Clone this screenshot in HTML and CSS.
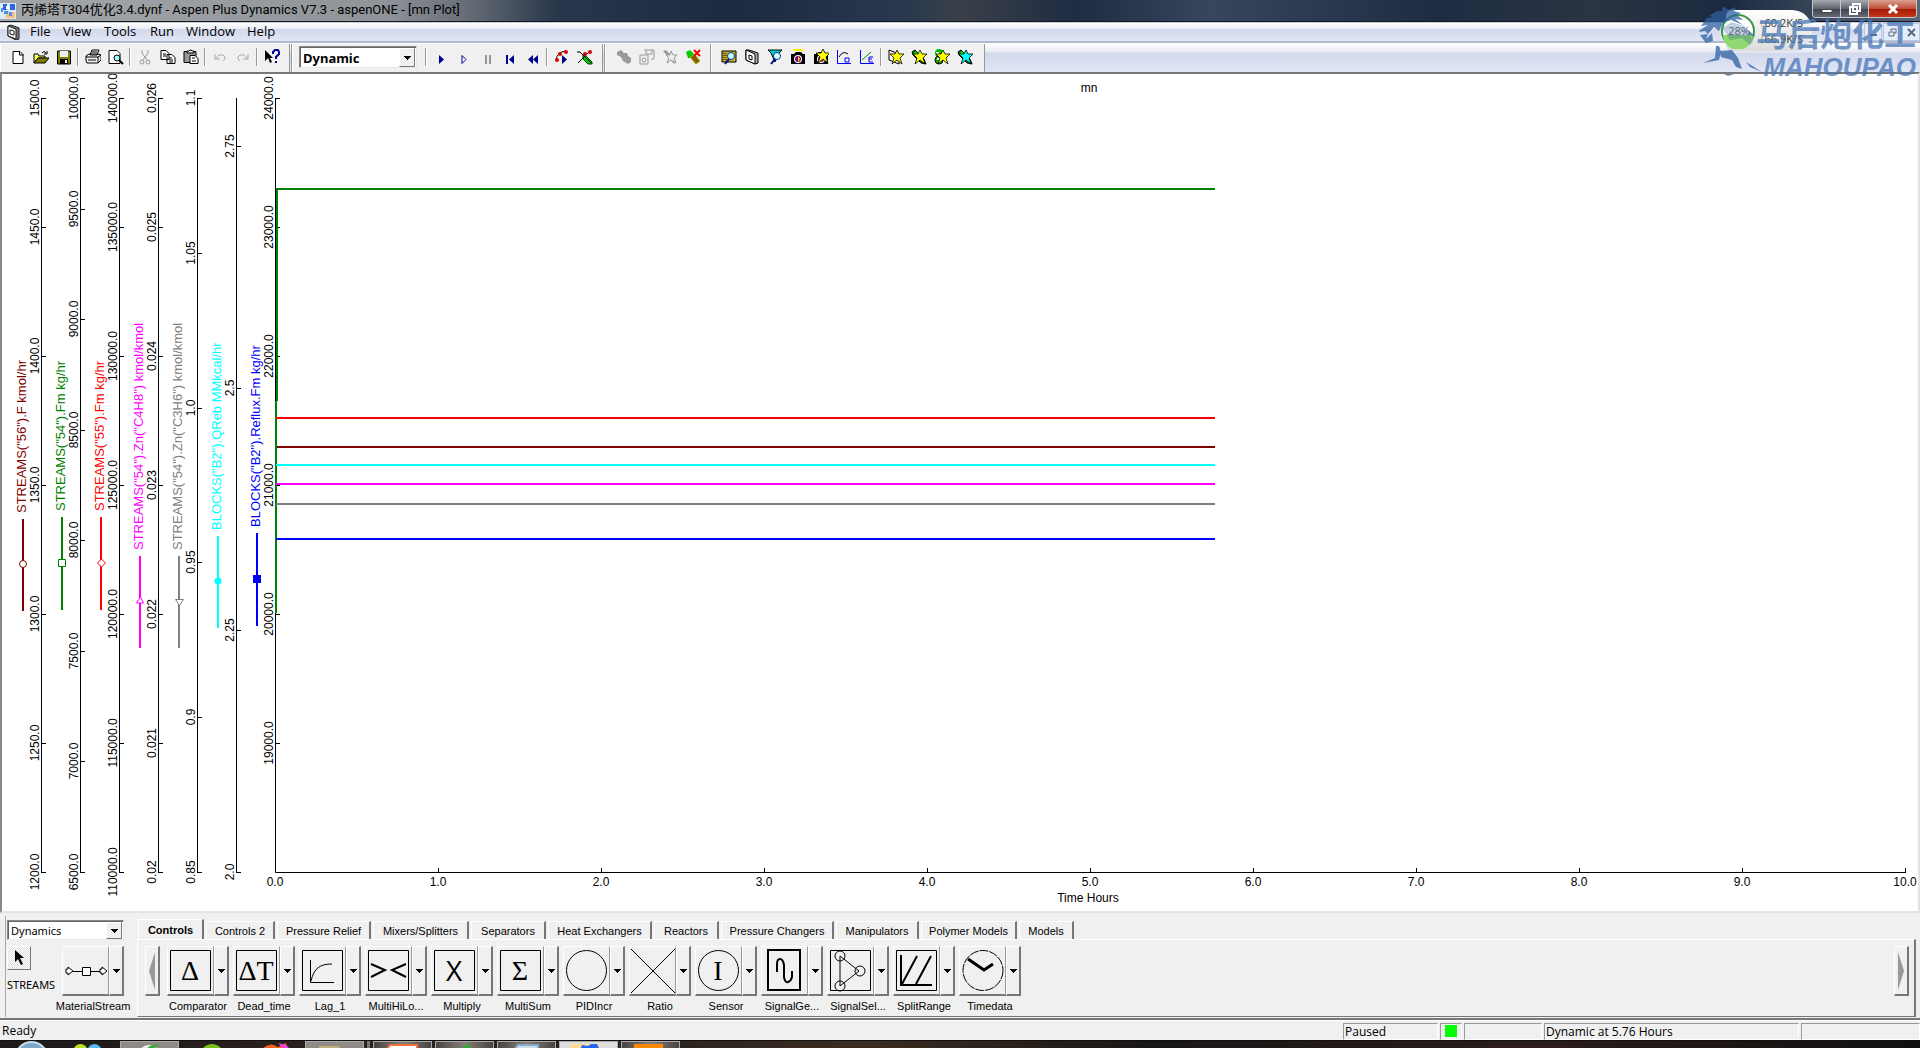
FILE: index.html
```html
<!DOCTYPE html>
<html lang="en">
<head>
<meta charset="utf-8">
<title>丙烯塔T304优化3.4.dynf - Aspen Plus Dynamics V7.3 - aspenONE - [mn Plot]</title>
<link rel="stylesheet" href="styles.css">
</head>
<body>
<svg class="defs" aria-hidden="true">
  <defs>
    <path id="star" d="M9 1l2 4h5l-4 4 2 6-5-4-5 4 2-6-4-4h5z" stroke="#000" stroke-width=".8"/>
    <path id="tri" d="M0 0h7v1H6v1H5v1H4v1H3V3H2V2H1V1H0z"/>
    <g id="cam"><path d="M1 5h3l2-2h5l2 2h2v10H1z" fill="#000"/><circle cx="8" cy="10" r="4" fill="#fff"/><circle cx="8" cy="10" r="3" fill="#800080"/><path d="M8 7l2 3-2 3z" fill="#ffe000"/></g>
    <g id="plug"><path d="M1 3l3-2 9 9 2 5-5-1-8-8z" fill="#008000" stroke="#000"/><path d="M4 3l8 8" stroke="#0f0" stroke-width="2"/></g>
  </defs>
</svg>

<header class="title-bar">
  <svg class="app-icon" viewBox="0 0 16 16"><path d="M0 0h16v16H0z" fill="#dfeaf8"/><path d="M6 9h9v6H6z" fill="#f8c070"/><path d="M3 1h4v6H3zM10 1h5v6h-5z" fill="#2868d8"/><path d="M1 5h2v4H1zM4 8h4v3H4zM9 9h3v4H9z" fill="#4a90e8"/><path d="M6 3h3v3H6z" fill="#fff"/></svg>
  <h1 class="title">丙烯塔T304优化3.4.dynf - Aspen Plus Dynamics V7.3 - aspenONE - [mn Plot]</h1>
  <div class="win-buttons">
    <button class="win-btn" aria-label="Minimize"><svg width="12" height="12" viewBox="0 0 12 12"><path d="M1 6.500h10v3H1z" fill="#fff" stroke="#444"/></svg></button>
    <button class="win-btn" aria-label="Restore"><svg width="12" height="12" viewBox="0 0 12 12"><path d="M4 1h7v7H4zM1 4h7v7H1z" fill="none" stroke="#fff" stroke-width="2"/></svg></button>
    <button class="win-btn close" aria-label="Close"><svg width="12" height="12" viewBox="0 0 12 12"><path d="M2 2l8 8M10 2l-8 8" stroke="#fff" stroke-width="3"/></svg></button>
  </div>
</header>

<nav class="menu-bar">
  <svg class="doc-icon" viewBox="0 0 16 16"><path d="M2 2l3-1 8 3v11l-3 1-8-4z" fill="#777" stroke="#222"/><path d="M2 2l8 3v10l-8-3z" fill="#eee" stroke="#222"/><path d="M4 6l4 1v4l-4-1z" fill="#fff" stroke="#222"/></svg>
  <button class="menu m1">File</button><button class="menu m2">View</button><button class="menu m3">Tools</button><button class="menu m4">Run</button><button class="menu m5">Window</button><button class="menu m6">Help</button>
  <div class="mdi-buttons">
    <button class="mdi" aria-label="Minimize document"><svg width="9" height="9" viewBox="0 0 9 9"><path d="M1 6h7v2H1z" fill="#5a6a84"/></svg></button>
    <button class="mdi" aria-label="Restore document"><svg width="9" height="9" viewBox="0 0 9 9"><path d="M3 3V1h5v4H6M1 4h5v4H1z" fill="none" stroke="#5a6a84"/></svg></button>
    <button class="mdi" aria-label="Close document"><svg width="9" height="9" viewBox="0 0 9 9"><path d="M1 1l7 7M8 1L1 8" stroke="#5a6a84" stroke-width="2"/></svg></button>
  </div>
</nav>

<div class="toolbars">
  <div class="toolbar">
    <button class="tool" aria-label="New"><svg viewBox="0 0 16 16"><path d="M3 2.500h7l3 3v9H3z" fill="#fff" stroke="#000"/><path d="M9.500 2.500v3.500h4" fill="none" stroke="#000"/></svg></button>
    <button class="tool" aria-label="Open"><svg viewBox="0 0 16 16"><path d="M1 14V5h4l1 2h6v2H5z" fill="#ffff60" stroke="#000"/><path d="M1 14l4-5h11l-4 5z" fill="#808000" stroke="#000"/><path d="M9 4q2-3 4 0M14 2v3h-3" fill="none" stroke="#000"/></svg></button>
    <button class="tool" aria-label="Save"><svg viewBox="0 0 16 16"><path d="M1.500 2h13v13h-13z" fill="#808000" stroke="#000"/><path d="M4 2h8v6H4z" fill="#eee"/><path d="M4 10h8v5H4z" fill="#000"/><path d="M9 11h2v3H9z" fill="#eee"/></svg></button>
    <i class="sep"></i>
    <button class="tool" aria-label="Print"><svg viewBox="0 0 16 16"><path d="M5 6l2-5h7l-2 5zM1 7l3-2h9l3 1v5l-3 3H2l-1-2z" fill="#eee" stroke="#000"/><path d="M1 8h12v5M13 8l3-2M3 11h8M7 3h5" fill="none" stroke="#000"/></svg></button>
    <button class="tool" aria-label="Print preview"><svg viewBox="0 0 16 16"><path d="M1 1.500h8l3 3v10H1z" fill="#fff" stroke="#000"/><circle cx="9" cy="9" r="3" fill="#9ff" stroke="#000"/><path d="M11 11l4 4" stroke="#000" stroke-width="2"/></svg></button>
    <i class="sep"></i>
    <button class="tool" aria-label="Cut"><svg viewBox="0 0 16 16" fill="none" stroke="#999"><path d="M5 1v3l5 7M11 1v3l-5 7"/><circle cx="5" cy="13" r="2"/><circle cx="11" cy="13" r="2"/></svg></button>
    <button class="tool" aria-label="Copy"><svg viewBox="0 0 16 16" fill="#fff" stroke="#000"><path d="M1 1.500h5l3 3v6H1zM7 5.500h5l3 3v6H7z"/><path d="M3 5h3M3 7h3M9 9h3M9 11h4M9 13h4"/></svg></button>
    <button class="tool" aria-label="Paste"><svg viewBox="0 0 16 16" stroke="#000"><path d="M1 2.500h12v11H1z" fill="#999"/><path d="M4 4V2h2l1-1h1l1 1h2v2z" fill="#eee"/><path d="M7 6.500h5l3 3v5H7z" fill="#fff"/><path d="M9 9h3M9 12h4"/></svg></button>
    <i class="sep"></i>
    <button class="tool" aria-label="Undo"><svg viewBox="0 0 16 16" fill="none" stroke="#aaa"><path d="M3 5v5h5M3 10l4-4h4l2 2v2l-2 2"/></svg></button>
    <button class="tool" aria-label="Redo"><svg viewBox="0 0 16 16" fill="none" stroke="#aaa"><path d="M13 5v5H8M13 10L9 6H5L3 8v2l2 2"/></svg></button>
    <i class="sep"></i>
    <button class="tool" aria-label="Context help"><svg viewBox="0 0 16 16"><path d="M1 1v11l3-3 2 5 2-1-2-4h3z"/><path d="M9 5V3l2-2h3l1 2v2l-3 3v2" fill="none" stroke="#000090" stroke-width="2"/><path d="M11 12h2v2h-2z" fill="#000090"/></svg></button>
  </div>
  <div class="toolbar">
    <label class="hidden" for="mode">Run mode</label>
    <span class="combo mode"><select id="mode"><option>Dynamic</option></select><span class="drop"><svg width="7" height="4"><use href="#tri"/></svg></span></span>
    <i class="sep"></i>
    <button class="tool" aria-label="Run"><svg viewBox="0 0 16 16"><path d="M6 6v9l5-4.500z" fill="#000090"/></svg></button>
    <button class="tool" aria-label="Step"><svg viewBox="0 0 16 16"><path d="M6 6.500v8l4-4z" fill="#fff" stroke="#000090"/></svg></button>
    <button class="tool" aria-label="Pause"><svg viewBox="0 0 16 16"><path d="M6 6h2v9H6zM10 6h2v9h-2z" fill="#999"/></svg></button>
    <button class="tool" aria-label="Restart"><svg viewBox="0 0 16 16"><path d="M4 6h2v9H4zM12 6v9l-5-4.500z" fill="#000090"/></svg></button>
    <button class="tool" aria-label="Rewind"><svg viewBox="0 0 16 16"><path d="M8 6v9l-5-4.500zM13 6v9l-5-4.500z" fill="#000090"/></svg></button>
    <i class="sep"></i>
    <button class="tool" aria-label="Run history"><svg viewBox="0 0 16 16"><path d="M2 11Q3 3 12 2" fill="none" stroke="#000"/><path d="M8 6v9l5-4.500z" fill="#000090"/><g fill="#e00000"><circle cx="3" cy="11" r="2"/><circle cx="6" cy="5" r="2"/><circle cx="12" cy="3" r="2"/></g></svg></button>
    <button class="tool" aria-label="Remove snapshots"><svg viewBox="0 0 16 16"><path d="M6 6l3 1 6 6v2h-4l-5-5z" fill="#0c0" stroke="#040"/><path d="M0 3h3l11 11M1 14L12 3" fill="none" stroke="#000"/><g fill="#e00000"><circle cx="8" cy="5" r="2"/><circle cx="13" cy="3" r="2"/></g></svg></button>
  </div>
  <div class="toolbar">
    <button class="tool" aria-label="Connect"><svg viewBox="0 0 16 16"><path d="M1 3l4-2 3 3h3l1 3 3 2v4l-3 2-5-3-2-4-4-2z" fill="#999"/></svg></button>
    <button class="tool" aria-label="Disk"><svg viewBox="0 0 16 16" fill="none" stroke="#999"><path d="M5 1h10v9h-3M7 1v4h6V1M1 6h8v9H1z"/><circle cx="5" cy="11" r="2"/></svg></button>
    <button class="tool" aria-label="New link"><svg viewBox="0 0 16 16"><path d="M1 2l3-1 10 11-2 3z" fill="#999"/><path d="M9 2l2 4h4l-3 3 2 5-5-3-4 3 2-5-3-3h4z" fill="#eee" stroke="#999"/></svg></button>
    <button class="tool" aria-label="Disconnect"><svg viewBox="0 0 16 16"><path d="M1 3l4-2 4 4-2 4H3z" fill="#0c0"/><path d="M5 8l5-2 5 6-4 3z" fill="#806000" stroke="#aa0"/><path d="M9 1l6 6M15 1L9 7" stroke="#f00" stroke-width="2"/></svg></button>
  </div>
  <div class="toolbar last">
    <button class="tool" aria-label="Explorer"><svg viewBox="0 0 16 16"><path d="M1 2h14v11H1z" fill="#c8b020" stroke="#000"/><path d="M3 4v7M5 4v7" stroke="#000" stroke-dasharray="1"/><circle cx="10" cy="7" r="3.500" fill="#cff" stroke="#0040a0"/><path d="M8 10l-4 5" stroke="#000090" stroke-width="2"/></svg></button>
    <button class="tool" aria-label="Flowsheet"><svg viewBox="0 0 16 16"><path d="M2 1l3 0 9 3v10l-3 1-9-4z" fill="#aaa" stroke="#000"/><path d="M2 1l9 4v10l-9-4z" fill="#fff" stroke="#000"/><path d="M5 6l3 1v4l-3-1z" fill="none" stroke="#000"/></svg></button>
    <button class="tool" aria-label="Find"><svg viewBox="0 0 16 16"><path d="M1 1h14l-3 3-4 9-4-9z" fill="#0cc" stroke="#000"/><circle cx="10" cy="7" r="3.500" fill="#dff" stroke="#0040a0"/><path d="M8 10l-4 5" stroke="#000090" stroke-width="2"/></svg></button>
    <button class="tool" aria-label="Snapshots"><svg viewBox="0 0 16 16"><use href="#cam"/><path d="M3 1h10" stroke="#fe0" stroke-width="2"/></svg></button>
    <button class="tool" aria-label="Take snapshot"><svg viewBox="0 0 16 16"><use href="#cam"/><use href="#star" fill="#ff0" x="1" y="-1"/></svg></button>
    <button class="tool" aria-label="Optimization"><svg viewBox="0 0 16 16" fill="none" stroke="#00f"><path d="M1.500 1v13.500H15M9 9h4v4H9z"/><path d="M3 8Q7 1 12 5" stroke="#000"/></svg></button>
    <button class="tool" aria-label="Estimation"><svg viewBox="0 0 16 16" fill="none" stroke="#00f"><path d="M1.500 1v13.500H15M14 8h-4v5h4M10 10h3"/><path d="M3 11l9-8" stroke="#080"/></svg></button>
    <i class="sep"></i>
    <button class="tool" aria-label="New flowsheet"><svg viewBox="0 0 16 16"><path d="M1 1l10 4v10l-10-4z" fill="#eee" stroke="#000"/><use href="#star" fill="#ff0"/></svg></button>
    <button class="tool" aria-label="New model"><svg viewBox="0 0 16 16"><use href="#plug"/><use href="#star" fill="#ff0"/></svg></button>
    <button class="tool" aria-label="New form"><svg viewBox="0 0 16 16"><circle cx="5" cy="4" r="4" fill="#0b0"/><circle cx="5" cy="11" r="4" fill="#0b0" stroke="#000"/><path d="M2 3h3v2H2zM3 9h3v2H3z" fill="#fff"/><use href="#star" fill="#ff0"/></svg></button>
    <button class="tool" aria-label="New task"><svg viewBox="0 0 16 16"><use href="#plug"/><use href="#star" fill="#0ff"/></svg></button>
  </div>
</div>

<main class="plot">
<svg class="chart" viewBox="2 74 1916 837" role="img" aria-label="mn plot">
  <text class="lbl" x="1089" y="92" text-anchor="middle">mn</text>
  <path class="axis" d="M41.500 98V872M80.500 98V872M119.500 98V872M158.500 98V872M197.500 98V872M236.500 98V872M275.500 98V872.500H1905
  M41 98.500h5M41 227.500h5M41 356.500h5M41 485.500h5M41 614.500h5M41 743.500h5M41 872.500h5
  M80 98.500h5M80 209.500h5M80 319.500h5M80 430.500h5M80 540.500h5M80 651.500h5M80 761.500h5M80 872.500h5
  M119 98.500h5M119 227.500h5M119 356.500h5M119 485.500h5M119 614.500h5M119 743.500h5M119 872.500h5
  M158 98.500h5M158 227.500h5M158 356.500h5M158 485.500h5M158 614.500h5M158 743.500h5M158 872.500h5
  M197 98.500h5M197 253.500h5M197 408.500h5M197 562.500h5M197 717.500h5M197 872.500h5
  M236 146.500h5M236 388.500h5M236 630.500h5M236 872.500h5
  M275 98.500h5M275 227.500h5M275 356.500h5M275 485.500h5M275 614.500h5M275 743.500h5
  M438.500 868v4M601.500 868v4M764.500 868v4M927.500 868v4M1090.500 868v4M1253.500 868v4M1416.500 868v4M1579.500 868v4M1742.500 868v4M1905.500 868v5"/>
  <g class="lbl" transform="rotate(-90)" text-anchor="middle">
    <text x="-98" y="39">1500.0</text><text x="-227" y="39">1450.0</text><text x="-356" y="39">1400.0</text><text x="-485" y="39">1350.0</text><text x="-614" y="39">1300.0</text><text x="-743" y="39">1250.0</text><text x="-872" y="39">1200.0</text>
    <text x="-98" y="78">10000.0</text><text x="-209" y="78">9500.0</text><text x="-319" y="78">9000.0</text><text x="-430" y="78">8500.0</text><text x="-540" y="78">8000.0</text><text x="-651" y="78">7500.0</text><text x="-761" y="78">7000.0</text><text x="-872" y="78">6500.0</text>
    <text x="-98" y="117">140000.0</text><text x="-227" y="117">135000.0</text><text x="-356" y="117">130000.0</text><text x="-485" y="117">125000.0</text><text x="-614" y="117">120000.0</text><text x="-743" y="117">115000.0</text><text x="-872" y="117">110000.0</text>
    <text x="-98" y="156">0.026</text><text x="-227" y="156">0.025</text><text x="-356" y="156">0.024</text><text x="-485" y="156">0.023</text><text x="-614" y="156">0.022</text><text x="-743" y="156">0.021</text><text x="-872" y="156">0.02</text>
    <text x="-98" y="195">1.1</text><text x="-253" y="195">1.05</text><text x="-408" y="195">1.0</text><text x="-562" y="195">0.95</text><text x="-717" y="195">0.9</text><text x="-872" y="195">0.85</text>
    <text x="-146" y="234">2.75</text><text x="-388" y="234">2.5</text><text x="-630" y="234">2.25</text><text x="-872" y="234">2.0</text>
    <text x="-98" y="273">24000.0</text><text x="-227" y="273">23000.0</text><text x="-356" y="273">22000.0</text><text x="-485" y="273">21000.0</text><text x="-614" y="273">20000.0</text><text x="-743" y="273">19000.0</text>
  </g>
  <g class="lbl series" transform="rotate(-90)">
    <text x="-513" y="26" fill="#800000">STREAMS("56").F kmol/hr</text>
    <text x="-511" y="65" fill="#008000">STREAMS("54").Fm kg/hr</text>
    <text x="-511" y="104" fill="#ff0000">STREAMS("55").Fm kg/hr</text>
    <text x="-550" y="143" fill="#ff00ff">STREAMS("54").Zn("C4H8") kmol/kmol</text>
    <text x="-550" y="182" fill="#808080">STREAMS("54").Zn("C3H6") kmol/kmol</text>
    <text x="-530" y="221" fill="#00ffff">BLOCKS("B2").QReb MMkcal/hr</text>
    <text x="-527" y="260" fill="#0000ff">BLOCKS("B2").Reflux.Fm kg/hr</text>
  </g>
  <g stroke-width="2">
    <path d="M23 519v92M276 447h939" stroke="#800000"/>
    <path d="M62 517v93M277 401V189H1215" stroke="#008000" fill="none"/>
    <path d="M276 401v212" stroke="#008000"/>
    <path d="M101 517v93M276 418h939" stroke="#ff0000"/>
    <path d="M140 556v92M276 484h939" stroke="#ff00ff"/>
    <path d="M179 556v92M276 504h939" stroke="#808080"/>
    <path d="M218 536v92M276 465h939" stroke="#00ffff"/>
    <path d="M257 533v93M276 539h939" stroke="#0000ff"/>
  </g>
  <g fill="#fff">
    <circle cx="23" cy="564" r="3.500" stroke="#800000"/>
    <path d="M58.500 559.500h7v7h-7z" stroke="#008000"/>
    <path d="M101.500 559l4 4-4 4-4-4z" stroke="#ff0000"/>
    <path d="M140.500 597l3 6h-7z" stroke="#ff00ff"/>
    <path d="M175.500 599.500h8l-4 6z" stroke="#808080"/>
    <circle cx="218" cy="581" r="3.500" fill="#00ffff"/>
    <path d="M253 575h8v8h-8z" fill="#0000ff"/>
  </g>
  <g class="lbl" text-anchor="middle">
    <text x="275" y="886">0.0</text><text x="438" y="886">1.0</text><text x="601" y="886">2.0</text><text x="764" y="886">3.0</text><text x="927" y="886">4.0</text><text x="1090" y="886">5.0</text><text x="1253" y="886">6.0</text><text x="1416" y="886">7.0</text><text x="1579" y="886">8.0</text><text x="1742" y="886">9.0</text><text x="1905" y="886">10.0</text>
    <text x="1088" y="902">Time Hours</text>
  </g>
</svg>
</main>

<section class="palette">
  <div class="streams">
    <label class="hidden" for="lib">Library</label>
    <span class="combo lib"><select id="lib"><option>Dynamics</option></select><span class="drop"><svg width="7" height="4"><use href="#tri"/></svg></span></span>
    <div class="stream-row">
      <div class="pick"><button class="pointer" aria-label="Select"><svg width="12" height="18" viewBox="0 0 12 18"><path d="M2 1v12l3-3 3 6 2-1-3-6h4z"/></svg></button><span class="pick-label">STREAMS</span></div>
      <div class="block"><div class="pair"><button class="model" aria-label="MaterialStream"><svg viewBox="0 0 44 44" fill="#fff" stroke="#000"><path d="M8 22.500h28"/><path d="M18.500 18.500h8v8h-8zM2 20h2v-2l5 4-5 4v-2H2zM36 20h2v-2l5 4-5 4v-2h-2z"/></svg></button><button class="arrow" aria-label="MaterialStream options"><svg width="7" height="4"><use href="#tri"/></svg></button></div><span class="name">MaterialStream</span></div>
    </div>
  </div>
  <div class="book">
    <div class="tabs" role="tablist">
      <button class="tab on" role="tab">Controls</button><button class="tab" role="tab">Controls 2</button><button class="tab" role="tab">Pressure Relief</button><button class="tab" role="tab">Mixers/Splitters</button><button class="tab" role="tab">Separators</button><button class="tab" role="tab">Heat Exchangers</button><button class="tab" role="tab">Reactors</button><button class="tab" role="tab">Pressure Changers</button><button class="tab" role="tab">Manipulators</button><button class="tab" role="tab">Polymer Models</button><button class="tab" role="tab">Models</button>
    </div>
    <div class="page">
      <button class="scroll" aria-label="Scroll left"><svg width="8" height="40"><path d="M7 1v38L1 20z" fill="#999"/></svg></button>
      <div class="blocks">
        <div class="block"><div class="pair"><button class="model" aria-label="Comparator"><svg viewBox="0 0 44 44"><path class="bx" d="M1.500 1.500h40v40h-40z"/><text x="21" y="31">Δ</text></svg></button><button class="arrow" aria-label="Comparator options"><svg width="7" height="4"><use href="#tri"/></svg></button></div><span class="name">Comparator</span></div>
        <div class="block"><div class="pair"><button class="model" aria-label="Dead_time"><svg viewBox="0 0 44 44"><path class="bx" d="M1.500 1.500h40v40h-40z"/><text x="21" y="31">ΔT</text></svg></button><button class="arrow" aria-label="Dead_time options"><svg width="7" height="4"><use href="#tri"/></svg></button></div><span class="name">Dead_time</span></div>
        <div class="block"><div class="pair"><button class="model" aria-label="Lag_1"><svg viewBox="0 0 44 44"><path class="bx" d="M1.500 1.500h40v40h-40zM9.500 11v22.500H33M10 32C13 19 19 15 31 15"/></svg></button><button class="arrow" aria-label="Lag_1 options"><svg width="7" height="4"><use href="#tri"/></svg></button></div><span class="name">Lag_1</span></div>
        <div class="block"><div class="pair"><button class="model" aria-label="MultiHiLo"><svg viewBox="0 0 44 44"><path class="bx" d="M1.500 1.500h40v40h-40z"/><path class="bx thick" d="M4 15l14 6-14 7M39 15l-14 6 14 7"/></svg></button><button class="arrow" aria-label="MultiHiLo options"><svg width="7" height="4"><use href="#tri"/></svg></button></div><span class="name">MultiHiLo...</span></div>
        <div class="block"><div class="pair"><button class="model" aria-label="Multiply"><svg viewBox="0 0 44 44"><path class="bx" d="M1.500 1.500h40v40h-40z"/><text class="sans" x="21" y="32">X</text></svg></button><button class="arrow" aria-label="Multiply options"><svg width="7" height="4"><use href="#tri"/></svg></button></div><span class="name">Multiply</span></div>
        <div class="block"><div class="pair"><button class="model" aria-label="MultiSum"><svg viewBox="0 0 44 44"><path class="bx" d="M1.500 1.500h40v40h-40z"/><text x="21" y="31">Σ</text></svg></button><button class="arrow" aria-label="MultiSum options"><svg width="7" height="4"><use href="#tri"/></svg></button></div><span class="name">MultiSum</span></div>
        <div class="block"><div class="pair"><button class="model" aria-label="PIDIncr"><svg viewBox="0 0 44 44"><circle class="bx" cx="21.500" cy="21.500" r="20"/></svg></button><button class="arrow" aria-label="PIDIncr options"><svg width="7" height="4"><use href="#tri"/></svg></button></div><span class="name">PIDIncr</span></div>
        <div class="block"><div class="pair"><button class="model" aria-label="Ratio"><svg viewBox="0 0 44 44"><path class="bx" d="M0 0l44 44M44 0L0 44"/></svg></button><button class="arrow" aria-label="Ratio options"><svg width="7" height="4"><use href="#tri"/></svg></button></div><span class="name">Ratio</span></div>
        <div class="block"><div class="pair"><button class="model" aria-label="Sensor"><svg viewBox="0 0 44 44"><circle class="bx" cx="21.500" cy="21.500" r="20"/><text x="21" y="31">I</text></svg></button><button class="arrow" aria-label="Sensor options"><svg width="7" height="4"><use href="#tri"/></svg></button></div><span class="name">Sensor</span></div>
        <div class="block"><div class="pair"><button class="model" aria-label="SignalGen"><svg viewBox="0 0 44 44"><path class="bx thick" d="M5 1h32v40H5zM14 23v-8q0-5 3-5t4 6v12q1 6 4 5t4-5v-6"/></svg></button><button class="arrow" aria-label="SignalGen options"><svg width="7" height="4"><use href="#tri"/></svg></button></div><span class="name">SignalGe...</span></div>
        <div class="block"><div class="pair"><button class="model" aria-label="SignalSelector"><svg viewBox="0 0 44 44"><path class="bx" d="M1.500 1.500h40v40h-40zM11 7v30L30 22z"/><g class="bx"><circle cx="11" cy="7" r="5"/><circle cx="11" cy="37" r="5"/><circle cx="31" cy="22" r="5"/></g></svg></button><button class="arrow" aria-label="SignalSelector options"><svg width="7" height="4"><use href="#tri"/></svg></button></div><span class="name">SignalSel...</span></div>
        <div class="block"><div class="pair"><button class="model" aria-label="SplitRange"><svg viewBox="0 0 44 44"><path class="bx" d="M1.500 1.500h40v40h-40z"/><path class="bx thick" d="M6 6v30h31M7 35L22 7M21 35L36 7"/></svg></button><button class="arrow" aria-label="SplitRange options"><svg width="7" height="4"><use href="#tri"/></svg></button></div><span class="name">SplitRange</span></div>
        <div class="block"><div class="pair"><button class="model" aria-label="Timedata"><svg viewBox="0 0 44 44"><circle class="bx" cx="22" cy="21.500" r="20" stroke-dasharray="9 1"/><path d="M7 10l16 11 9-6" fill="none" stroke="#000" stroke-width="3"/></svg></button><button class="arrow" aria-label="Timedata options"><svg width="7" height="4"><use href="#tri"/></svg></button></div><span class="name">Timedata</span></div>
      </div>
      <button class="scroll" aria-label="Scroll right"><svg width="8" height="40"><path d="M1 1v38l6-19z" fill="#999"/></svg></button>
    </div>
  </div>
</section>

<footer class="status">
  <span>Ready</span><span class="cell">Paused</span><span class="cell"><i class="lamp"></i></span><span class="cell"></span><span class="cell">Dynamic at 5.76 Hours</span><span class="cell"></span>
</footer>

<div class="taskbar">
  <svg class="task t-orb" viewBox="0 0 108 8"><circle cx="27" cy="17" r="16" fill="#7fa8c8" stroke="#c8dcec" stroke-width="2"/><circle cx="76" cy="10" r="7" fill="#b8e020"/><circle cx="90" cy="10" r="7" fill="#58b8f0"/></svg>
  <button class="task lit" aria-label="Browser"><svg viewBox="0 0 56 8"><circle cx="28" cy="14" r="11" fill="#eee"/><path d="M26 6q6-5 12-3l-8 5z" fill="#3a3"/></svg></button>
  <svg class="task t-mid" viewBox="0 0 120 8"><circle cx="30" cy="15" r="12" fill="#7cc020"/><path d="M80 8q8-8 16-2l8-4 2 6z" fill="#f06020"/><path d="M96 2l8 2 4 4h-6z" fill="#f040f0"/></svg>
  <button class="task lit" aria-label="Folder"><svg viewBox="0 0 56 8"><path d="M13 8V4h20l2 4z" fill="#c0b080"/></svg></button>
  <i class="stack"></i>
  <button class="task" aria-label="Presentation"><svg viewBox="0 0 56 8"><path d="M12 8l4-5h27v5z" fill="#fff" stroke="#f07040" stroke-width="2"/></svg></button>
  <button class="task" aria-label="Editor"><svg viewBox="0 0 56 8"><path d="M22 8L34 1v7z" fill="#3a3"/></svg></button>
  <button class="task" aria-label="Document"><svg viewBox="0 0 56 8"><path d="M16 8l4-5h20v5z" fill="#cde" stroke="#8ac" stroke-width="2"/></svg></button>
  <button class="task active" aria-label="Aspen Plus Dynamics"><svg viewBox="0 0 56 8"><path d="M10 2h30v6H10z" fill="#fd9"/><path d="M20 8l2-5 6 1 3-2h6l3 6z" fill="#26f"/></svg></button>
  <button class="task" aria-label="Window"><svg viewBox="0 0 56 8"><path d="M12 2h29v6H12z" fill="#f80"/><path d="M16 6h21v2H16z" fill="#fff"/></svg></button>
</div>

<aside class="gadget"><svg width="36" height="36" viewBox="0 0 36 36"><circle cx="18" cy="18" r="16" fill="#fff" stroke="#3a9a44" stroke-width="2"/><path d="M3 22h30a15 15 0 0 1-30 0z" fill="#90d870"/></svg><span class="pct">28%</span><div class="rates"><span><b class="up">↑</b>60.2K/S</span><span><b class="down">↓</b>66.9K/S</span></div></aside>
<div class="brand">
  <svg class="horse" viewBox="0 0 78 76"><path d="M2 26l8-5-7 1 6-8 6-1-4-1 8-5h5L25 2l5 4 8-3-2 4 7 2-4 2 6 5-8-1 8 6-12-5-8 3-4 8-5-4-6 7-3-3-6 1zM2 31l8-1-2 5 6-6 1 8-7 2zM18 42h3l2 6-2 8-16 3 12-5zM22 47l12-1 6 8 4 11-6-2-4-7-11-3zM48 58l16 10-12-5zM26 70h10l-6 2zM50 26l7 6-6-1z"/><path d="M24 24l10-6 14 5 7 14-3 4-8-7-12 2z" opacity=".4"/></svg>
  <div class="brand-text"><span class="cn">马后炮化工</span><span class="en">MAHOUPAO</span></div>
</div>
</body>
</html>
```
FILE: styles.css
```css
* { box-sizing: border-box; }
body {
  margin: 0; min-height: 100vh; position: relative; overflow-x: hidden;
  display: flex; flex-direction: column;
  background: #f0f0f0; color: #000;
  font: 12px/16px "Open Sans", "Noto Sans CJK SC", sans-serif;
}
button { margin: 0; padding: 0; border: 0; background: none; font: inherit; color: inherit; }
svg { display: block; flex: none; }
.defs { position: absolute; width: 0; height: 0; }
.hidden { position: absolute; width: 1px; height: 1px; overflow: hidden; clip-path: inset(50%); }

/* title bar */
.title-bar {
  display: flex; height: 22px; padding-right: 3px;
  background: linear-gradient(90deg, #a4a7aa, #8f9499 20%, #6a7078 24%, #28374b 29%, #1d2a3f 38%, #27384f 47%, #3a4048 50%, #1f2c42 56%, #36465c 63%, #1e2c42 75%, #2b3443 83%, #1c293f 90%, #5b6677);
  border-bottom: 1px solid #111722;
}
.app-icon { width: 16px; height: 16px; margin-top: 3px; }
.title { flex: 1; margin: 0 0 0 5px; font: 400 13px/20px Roboto, "Noto Sans CJK SC", sans-serif; }
.win-buttons { display: flex; height: 18px; border: 1px solid #c4c8d0; border-top: 0; border-radius: 0 0 4px 4px; overflow: hidden; }
.win-btn { width: 28px; display: grid; place-items: center; background: linear-gradient(#a5a9b0, #60656f 50%, #3c424e 51%, #646a76); border-right: 1px solid #c4c8d0; }
.win-btn.close { width: 47px; border: 0; background: linear-gradient(#d8a090, #c05038 50%, #a01808 51%, #c83818); }

/* menu bar */
.menu-bar {
  display: flex; align-items: center; height: 21px; padding-left: 6px;
  background: linear-gradient(#fff, #e8ecf6 33%, #d3d9ec 34%, #e0e6f6);
  border-top: 1px solid #c9ccd4; border-bottom: 2px solid #b4bacb;
}
.doc-icon { width: 16px; height: 16px; }
.menu { text-align: left; margin-left: 8px; padding-bottom: 2px; font-size: 13px; line-height: 16px; }
.m1 { width: 25px; } .m2 { width: 33px; } .m3 { width: 38px; } .m4 { width: 28px; } .m5 { width: 53px; } .m6 { width: 40px; }
.mdi-buttons { display: flex; gap: 1px; margin-left: auto; }
.mdi { width: 18px; height: 18px; display: grid; place-items: center; background: #e4edfa; border: 1px solid #b8c8e0; }

/* toolbars */
.toolbars {
  display: flex; height: 29px; border-top: 1px solid #fff;
  background: linear-gradient(#fff, #e4e8f3 30%, #d3d9ec 31%, #e0e6f6);
}
.toolbar { display: flex; align-items: center; background: #f0f0f0; padding: 0 6px 2px; border-right: 1px solid #999; box-shadow: inset 1px 0 #fff; }
.toolbar + .toolbar { border-left: 1px solid #999; margin-left: 1px; padding-left: 7px; }
.toolbar.toolbar.last { padding-right: 8px; border-left: 0; margin-left: 0; padding-left: 6px; }
.tool { width: 23px; height: 22px; display: grid; place-items: center; }
.tool svg { width: 16px; height: 16px; }
.sep { width: 6px; height: 18px; background: linear-gradient(90deg, transparent 2px, #999 2px, #999 3px, #fff 3px, #fff 4px, transparent 4px); }
.combo { display: flex; background: #fff; border: 1px solid; border-color: #888 #e8e8e8 #e8e8e8 #888; box-shadow: inset 1px 1px #666; padding: 1px 1px 0 2px; }
.combo select { flex: 1; min-width: 0; appearance: none; border: 0; padding: 0 1px; background: none; font: inherit; color: inherit; }
.drop { width: 16px; display: grid; place-items: center; background: #f0f0f0; border: 1px solid; border-color: #fff #777 #777 #fff; }
.mode { width: 118px; height: 22px; font: bold 13px/18px "Noto Sans", sans-serif; margin-right: 6px; }

/* plot */
.plot { background: #fff; border: 2px solid; border-color: #777 #e3e3e3 #e3e3e3 #888; }
.chart { width: 100%; height: auto; }
.axis { fill: none; stroke: #000; }
.lbl { font: 12px "Liberation Sans", Arial, sans-serif; }
.series { font-size: 13px; }

/* model palette */
.palette { display: flex; margin-top: 3px; height: 104px; padding: 0 4px 1px 5px; border-bottom: 2px solid #777; }
.streams { width: 132px; padding: 4px 0 0 2px; box-shadow: inset 1px 0 #aaa; }
.lib { width: 117px; height: 20px; margin-bottom: 6px; font: 11px/16px "Noto Sans", sans-serif; }
.stream-row { display: flex; gap: 3px; }
.pick { width: 50px; }
.pointer { width: 24px; height: 24px; display: grid; place-items: center; background: repeating-conic-gradient(#fff 0 25%, #ddd 0 50%) 0 0 / 2px 2px; border: 1px solid; border-color: #fff #777 #777 #fff; }
.pick-label { display: block; margin-top: 7px; font: 11px/16px "Noto Sans", sans-serif; }
.book { flex: 1; min-width: 0; display: flex; flex-direction: column; }
.tabs { display: grid; grid-template-columns: 68px 71px 96px 98px 77px 106px 67px 115px 85px 98px 57px; height: 23px; margin-left: 1px; align-items: end; font: 11px/16px "Liberation Sans", sans-serif; }
.tab { height: 18px; margin-right: 2px; white-space: nowrap; border: 1px solid #fff; border-right: 2px solid #777; border-bottom: 0; }
.tab.on { height: 20px; font-weight: 700; }
.page { flex: 1; display: flex; align-items: flex-start; padding: 6px 5px 0 7px; border: 1px solid; border-color: #fff #777 #777 #fff; border-right-width: 2px; }
.scroll { width: 15px; height: 50px; flex: none; display: grid; place-items: center; border: 1px solid; border-color: #fff #777 #777 #fff; border-right-width: 2px; border-bottom-width: 2px; }
.blocks { flex: 1; min-width: 0; display: flex; padding-left: 5px; }
.block { width: 66px; flex: none; display: flex; flex-direction: column; align-items: center; font: 11px/16px "Liberation Sans", sans-serif; }
.pair { display: flex; }
.model, .arrow { height: 50px; display: grid; place-items: center; border: 1px solid; border-color: #fff #999 #777 #fff; border-bottom-width: 2px; }
.model { width: 47px; }
.model svg { width: 44px; height: 44px; }
.arrow { width: 15px; border-right: 2px solid #777; }
.name { margin-top: 2px; white-space: nowrap; }
.bx { fill: none; stroke: #000; }
.thick { stroke-width: 2; }
.model text { font: 28px "Liberation Serif", serif; text-anchor: middle; }
.model text.sans { font: 28px "Open Sans", sans-serif; }

/* status bar */
.status { display: grid; grid-template-columns: 1fr 95px 22px 78px 255px 119px; column-gap: 2px; height: 20px; padding-top: 2px; border-top: 1px solid #fff; padding-left: 2px; line-height: 16px; }
.cell { border: 1px solid; border-color: #999 #fff #fff #999; padding-left: 1px; line-height: 15px; }
.lamp { display: block; width: 12px; height: 12px; margin: 1px 0 0 3px; background: #0f0; }

/* taskbar */
.taskbar { flex: 1; min-height: 8px; max-height: 8px; display: flex; gap: 3px; overflow: hidden; background: linear-gradient(90deg, #1c1918, #2c2220 20%, #2a2220 34%, #3a2c20 45%, #181616 60%, #2a1c1a 80%, #101010); border-top: 1px solid #111; }
.task { width: 59px; height: 8px; border: 1px solid #aaa; border-bottom: 0; background: linear-gradient(90deg, #4a4440, #857d78, #4a4440); overflow: hidden; }
.task svg { width: 56px; height: 8px; }
.task.lit { background: #908a86; }
.task.active { background: #ddd; }
.t-orb, .t-mid { border: 0; background: none; }
.t-orb { width: 117px; }
.t-mid { width: 120px; }

/* desktop overlays */
.gadget { position: absolute; top: 10px; right: 108px; width: 86px; height: 41px; display: flex; align-items: center; background: linear-gradient(#fff, #dcdcdc); border-radius: 6px 20px 20px 6px; font: 11px/16px "Open Sans", sans-serif; }
.gadget > svg { margin-left: -6px; }
.pct { width: 34px; margin-left: -34px; text-align: center; color: #666; }
.rates { display: grid; margin-left: 3px; color: #333; white-space: nowrap; }
.up { color: #e06030; } .down { color: #2a8a3a; }
.brand { position: absolute; top: 4px; right: 4px; display: flex; color: #4876b4; opacity: .75; pointer-events: none; }
.horse { width: 78px; height: 76px; fill: #2f609f; margin-right: -20px; }
.brand-text { display: grid; align-content: start; justify-items: end; padding-top: 8px; white-space: nowrap; }
.cn { font: 700 32px/40px "Noto Sans CJK SC", sans-serif; }
.en { font: italic 700 26px/30px "Liberation Sans", sans-serif; }
.stack { width: 3px; background: #777; }
```
